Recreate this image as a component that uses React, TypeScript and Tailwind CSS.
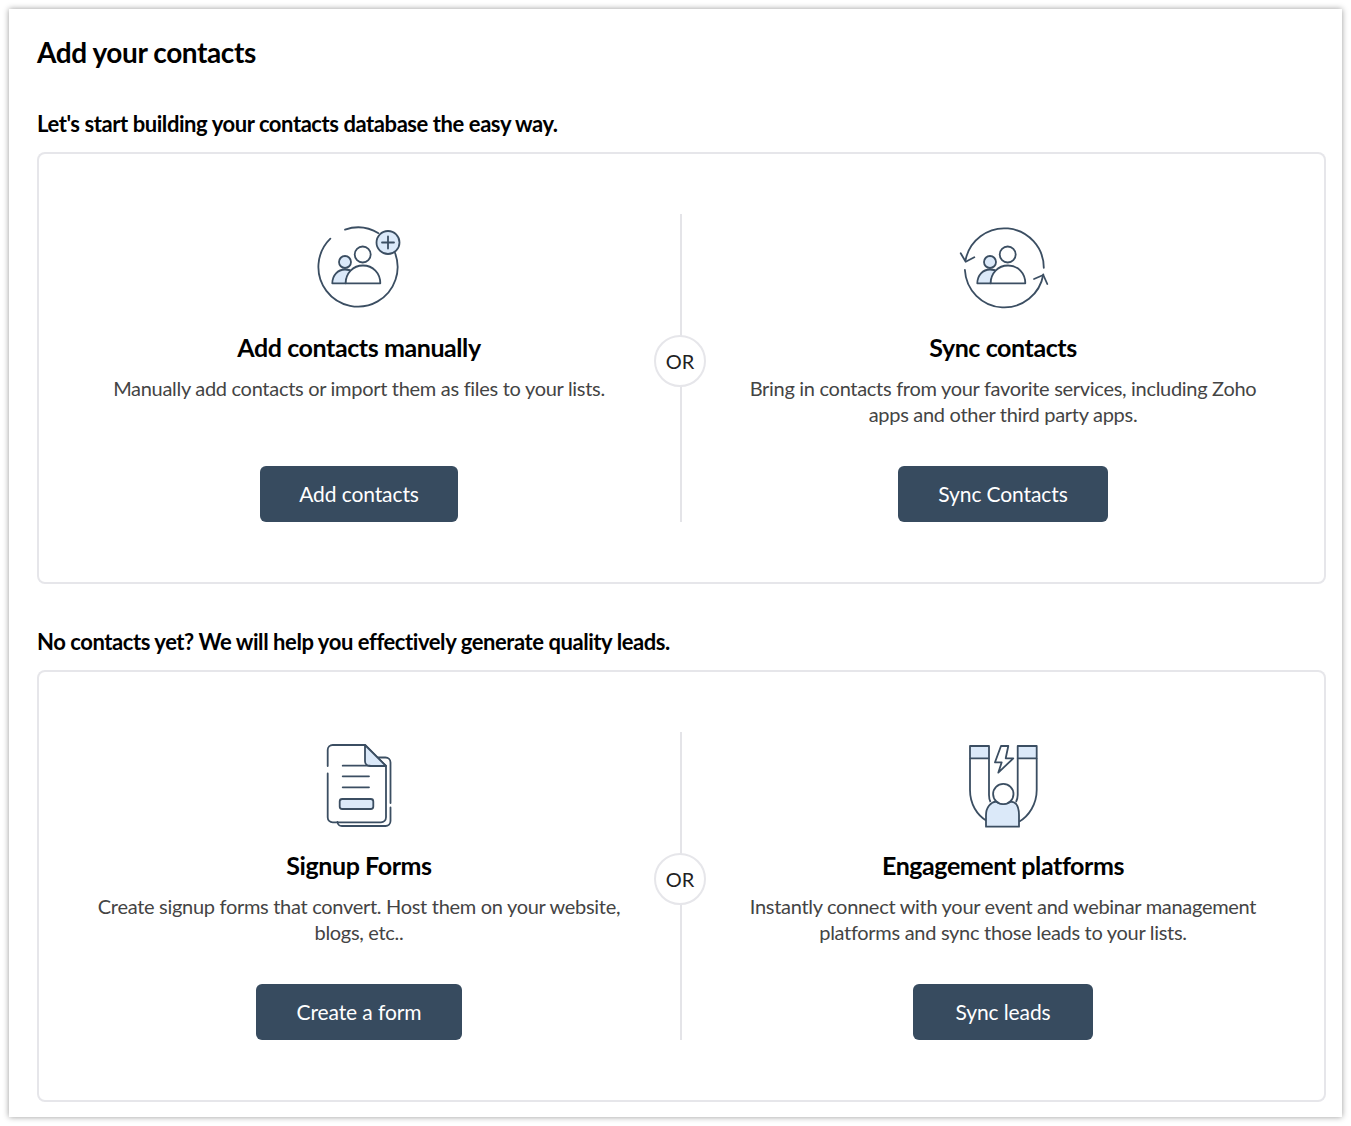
import React from "react";

const stroke = "#3b4e62";
const tint = "#dbe9f9";

const People = () => (
  <g stroke={stroke} strokeWidth="1.8" strokeLinejoin="round" fill="none">
    <path d="M32.3 68.3C32.3 60 38 54.5 45 54.5C48 54.5 50.5 55.3 52.5 56.8C48 59.8 45.7 63.5 45.7 68.3Z" fill={tint} />
    <circle cx="45" cy="47" r="6" fill={tint} />
    <circle cx="62.7" cy="39.5" r="8" fill="#fff" />
    <path d="M45.7 68.3C45.7 58 53 50.5 63 50.5C73 50.5 80.3 58 80.3 68.3Z" fill="#fff" />
  </g>
);

const AddIcon = () => (
  <svg width="120" height="106" viewBox="-1 -1 120 106" fill="none">
    <g stroke={stroke} strokeWidth="1.8" strokeLinecap="round">
      <path d="M30.35 23.64A39.6 39.6 0 1 0 94.55 36.77" />
      <path d="M45 14.6A39.6 39.6 0 0 1 78.5 18.15" />
      <circle cx="88" cy="27.5" r="11.5" fill={tint} />
      <path d="M88 21.5V33.5M82 27.5H94" />
    </g>
    <People />
  </svg>
);

const SyncIcon = () => (
  <svg width="120" height="106" viewBox="-2 -1 120 106" fill="none">
    <g stroke={stroke} strokeWidth="1.8" strokeLinecap="round" strokeLinejoin="round">
      <path d="M20.5 45.4A39.5 39.5 0 0 1 98.8 52.8" />
      <path d="M19.9 55A39.5 39.5 0 0 0 98.3 59.5" />
      <path d="M15.7 38.3L20.7 46.7L29.3 42.3" />
      <path d="M89 64L98.3 60L102.3 69" />
    </g>
    <People />
  </svg>
);

const FormIcon = () => (
  <svg width="120" height="106" viewBox="-1 -3 120 106" fill="none">
    <g stroke={stroke} strokeWidth="1.8" strokeLinecap="round" strokeLinejoin="round">
      <path d="M78 22.5H85.5A5 5 0 0 1 90.5 27.5V68M90.5 72.5V86A5 5 0 0 1 85.5 91H42A4.5 4.5 0 0 1 37.5 87" />
      <path d="M27.7 31V15A5 5 0 0 1 32.7 10H65L86 31V82.3A5 5 0 0 1 81 87.3H32.7A5 5 0 0 1 27.7 82.3V38.5" />
      <path d="M65 10V26A5 5 0 0 0 70 31H86Z" fill={tint} />
      <path d="M42.7 30.7H70M42.7 41.3H69M42.7 52.3H69" />
      <rect x="39.7" y="64" width="33.6" height="10" rx="2.5" fill={tint} />
    </g>
  </svg>
);

const LeadsIcon = () => (
  <svg width="120" height="106" viewBox="-2 -3 120 106" fill="none">
    <g stroke={stroke} strokeWidth="1.8" strokeLinejoin="round">
      <rect x="25" y="11" width="19" height="12.3" fill={tint} />
      <rect x="72.7" y="11" width="19" height="12.3" fill={tint} />
      <path d="M25 23.3V55C25 69 32 80 41.5 85.7M44 23.3V60C44 63 44.5 65 45.5 67" />
      <path d="M91.7 23.3V55C91.7 69 84 81 74 86.7M72.7 23.3V60C72.7 63 72 65 71 67" />
      <path d="M41 91.7V80C41 72 46 67 51 66.7Q58 71 66 66.7C71 67 74 72 74 80V91.7Z" fill={tint} />
      <circle cx="58.3" cy="59" r="10.2" fill="#fff" />
      <path d="M63.3 11H56L50 27.3H56.7L53.3 37.7L68.3 23.3H60.7Z" />
    </g>
  </svg>
);

const Option = ({
  icon,
  title,
  text,
  action,
  buttonWidth,
}: {
  icon: React.ReactNode;
  title: string;
  text: string;
  action: string;
  buttonWidth: string;
}) => (
  <div className="flex w-[644px] shrink-0 flex-col items-center text-center">
    {icon}
    <h3 className="mt-3 text-[25px] leading-[30px] font-bold tracking-[-0.42px] text-black">{title}</h3>
    <p className="mt-[13px] h-[52px] w-[530px] text-[20px] leading-[26px] tracking-[-0.3px] text-[#444]">{text}</p>
    <button className={`mt-[39px] h-14 rounded-md bg-[#374b5f] text-[21px] tracking-[-0.1px] text-white ${buttonWidth}`}>
      {action}
    </button>
  </div>
);

const Panel = ({ children }: { children: React.ReactNode }) => (
  <div className="relative flex h-[432px] rounded-lg py-[62px] ring-2 ring-inset ring-[#e6e6ea]">
    {children}
    <div className="absolute left-[643px] top-[62px] bottom-[62px] w-0.5 bg-[#e4e4e8]" />
    <div className="absolute left-[617px] top-[183px] flex h-[52px] w-[52px] items-center justify-center rounded-full border-2 border-[#e6e6ea] bg-white text-[20px] text-[#222]">
      OR
    </div>
  </div>
);

export default function App() {
  return (
    <div className="h-[1126px] bg-white p-[9px] font-['Lato',sans-serif]">
      <div className="h-[1108px] bg-white pl-[28px] pr-4 pt-[23px] shadow-[0_0_6px_rgba(0,0,0,0.4)]">
        <h1 className="text-[28px] leading-10 font-bold tracking-[-0.4px] text-black">Add your contacts</h1>
        <h2 className="mt-9 mb-3 text-[22px] leading-8 font-bold tracking-[-0.43px] text-black">
          Let's start building your contacts database the easy way.
        </h2>
        <Panel>
          <Option icon={<AddIcon />} title="Add contacts manually" text="Manually add contacts or import them as files to your lists." action="Add contacts" buttonWidth="w-[198px]" />
          <Option icon={<SyncIcon />} title="Sync contacts" text="Bring in contacts from your favorite services, including Zoho apps and other third party apps." action="Sync Contacts" buttonWidth="w-[210px]" />
        </Panel>
        <h2 className="mt-[42px] mb-3 text-[22px] leading-8 font-bold tracking-[-0.43px] text-black">
          No contacts yet? We will help you effectively generate quality leads.
        </h2>
        <Panel>
          <Option icon={<FormIcon />} title="Signup Forms" text="Create signup forms that convert. Host them on your website, blogs, etc.." action="Create a form" buttonWidth="w-[206px]" />
          <Option icon={<LeadsIcon />} title="Engagement platforms" text="Instantly connect with your event and webinar management platforms and sync those leads to your lists." action="Sync leads" buttonWidth="w-[180px]" />
        </Panel>
      </div>
    </div>
  );
}
